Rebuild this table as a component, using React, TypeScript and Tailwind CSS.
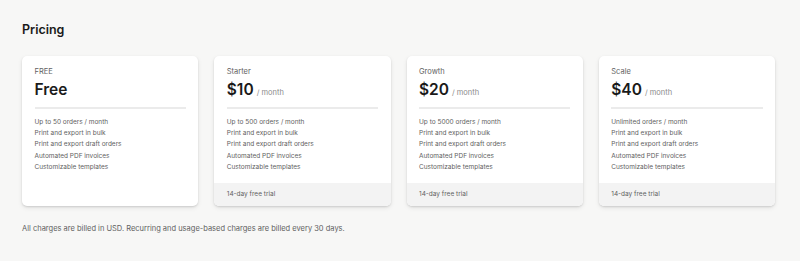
const plans = [
  { label: 'FREE', price: 'Free', unit: false, orders: 'Up to 50 orders / month', trial: false },
  { label: 'Starter', price: '$10', unit: true, orders: 'Up to 500 orders / month', trial: true },
  { label: 'Growth', price: '$20', unit: true, orders: 'Up to 5000 orders / month', trial: true },
  { label: 'Scale', price: '$40', unit: true, orders: 'Unlimited orders / month', trial: true },
];

const features = [
  'Print and export in bulk',
  'Print and export draft orders',
  'Automated PDF invoices',
  'Customizable templates',
];

export default function App() {
  return (
    <div className="h-[261px] w-[800px] bg-[#f7f7f6] px-[22px] pt-[22px] font-['Inter',sans-serif] text-[#303030]">
      <h1 className="text-[12.5px] font-semibold leading-[16px] text-[#1a1a1a]">Pricing</h1>

      <div className="mt-[18px] grid grid-cols-4 gap-[16px] w-[753px]">
        {plans.map((p) => (
          <div
            key={p.label}
            className="flex h-[150px] flex-col overflow-hidden rounded-[5px] bg-white shadow-[0_1px_2px_rgba(0,0,0,0.12),0_2px_5px_rgba(0,0,0,0.08)]"
          >
            <div className="flex-1 px-[12.5px] pt-[11px]">
              <div className="text-[7.5px] leading-[10px] text-[#616161]">{p.label}</div>
              <div className="mt-[2px] flex items-baseline gap-[3px]">
                <span className="text-[15.5px] font-semibold leading-[22px] text-[#1a1a1a]">{p.price}</span>
                {p.unit && <span className="text-[7.5px] text-[#8a8a8a]">/ month</span>}
              </div>
              <div className="mt-[6px] h-[1.5px] bg-[#ebebeb]" />
              <ul className="mt-[8px] text-[6.5px] leading-[11.4px] text-[#616161]">
                <li>{p.orders}</li>
                {features.map((f) => (
                  <li key={f}>{f}</li>
                ))}
              </ul>
            </div>
            {p.trial && (
              <div className="flex h-[23px] items-center bg-[#f3f3f3] px-[12.5px] text-[6.5px] text-[#616161]">
                14-day free trial
              </div>
            )}
          </div>
        ))}
      </div>

      <p className="mt-[18px] text-[7.5px] leading-[10px] text-[#616161]">
        All charges are billed in USD. Recurring and usage-based charges are billed every 30 days.
      </p>
    </div>
  );
}
